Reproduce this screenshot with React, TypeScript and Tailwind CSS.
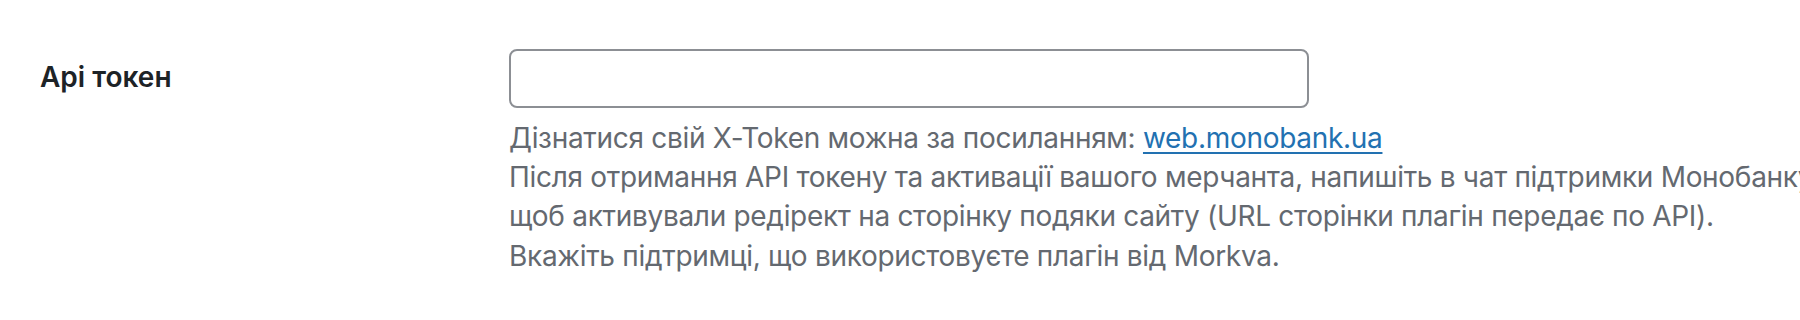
import React from "react";

export default function App() {
  return (
    <div
      className="w-[1800px] h-[320px] overflow-hidden bg-white"
      style={{ fontFamily: 'Inter, "Liberation Sans", sans-serif' }}
    >
      <div className="flex pt-[19px]">
        <div className="w-[509px] shrink-0 pl-[40px] pt-[40px]">
          <div className="text-[28px] leading-[36px] font-semibold text-[#1d2327]">Api токен</div>
        </div>
        <div className="pt-[30px] min-w-0">
          <input
            type="text"
            className="block w-[800px] h-[59px] rounded-[8px] border-2 border-[#8c8f94] bg-white px-4 outline-none"
          />
          <p className="mt-[11px] text-[28px] leading-[39.2px] tracking-[-0.3px] text-[#646970] whitespace-nowrap">
            Дізнатися свій X-Token можна за посиланням:{" "}
            <a href="#" className="text-[#2271b1] underline underline-offset-[4px] decoration-2">
              web.monobank.ua
            </a>
            <br />
            Після отримання API токену та активації вашого мерчанта, напишіть в чат підтримки Монобанку,
            <br />
            щоб активували редірект на сторінку подяки сайту (URL сторінки плагін передає по API).
            <br />
            Вкажіть підтримці, що використовуєте плагін від Morkva.
          </p>
        </div>
      </div>
    </div>
  );
}
